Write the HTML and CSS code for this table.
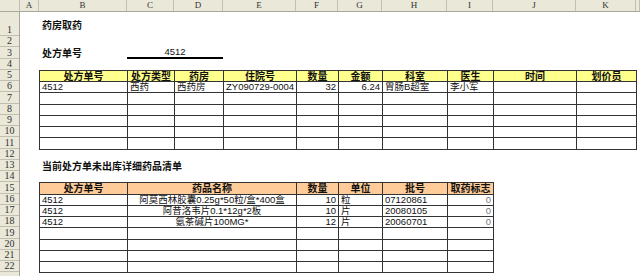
FILE: index.html
```html
<!DOCTYPE html>
<html lang="zh">
<head>
<meta charset="utf-8">
<title>药房取药</title>
<link rel="stylesheet" href="styles.css">
</head>
<body>
<div class="sheet">
  <div class="corner"></div>
  <div class="colhdr">
    <div class="ch">A</div>
    <div class="ch">B</div>
    <div class="ch">C</div>
    <div class="ch">D</div>
    <div class="ch">E</div>
    <div class="ch">F</div>
    <div class="ch">G</div>
    <div class="ch">H</div>
    <div class="ch">I</div>
    <div class="ch">J</div>
    <div class="ch">K</div>
    <div class="ch"></div>
  </div>
  <div class="rowhdr">
    <div class="rh">1</div><div class="rh">2</div><div class="rh">3</div><div class="rh">4</div>
    <div class="rh">5</div><div class="rh">6</div><div class="rh">7</div><div class="rh">8</div>
    <div class="rh">9</div><div class="rh">10</div><div class="rh">11</div><div class="rh">12</div>
    <div class="rh">13</div><div class="rh">14</div><div class="rh">15</div><div class="rh">16</div>
    <div class="rh">17</div><div class="rh">18</div><div class="rh">19</div><div class="rh">20</div>
    <div class="rh">21</div><div class="rh">22</div><div class="rh"></div>
  </div>
  <div class="body">
    <div class="title title-main">药房取药</div>
    <div class="title rx-label">处方单号</div>
    <div class="rx-value">4512</div>

    <table class="grid-table table-main">
      <colgroup>
        <col class="w-b"><col class="w-c"><col class="w-d"><col class="w-e"><col class="w-f">
        <col class="w-g"><col class="w-h"><col class="w-i"><col class="w-j"><col class="w-k">
      </colgroup>
      <tr class="head yellow">
        <th>处方单号</th><th>处方类型</th><th>药房</th><th>住院号</th><th>数量</th>
        <th>金额</th><th>科室</th><th>医生</th><th>时间</th><th>划价员</th>
      </tr>
      <tr>
        <td>4512</td><td>西药</td><td>西药房</td><td>ZY090729-0004</td><td class="num">32</td>
        <td class="num">6.24</td><td>胃肠B超室</td><td>李小军</td><td></td><td></td>
      </tr>
      <tr><td></td><td></td><td></td><td></td><td></td><td></td><td></td><td></td><td></td><td></td></tr>
      <tr><td></td><td></td><td></td><td></td><td></td><td></td><td></td><td></td><td></td><td></td></tr>
      <tr><td></td><td></td><td></td><td></td><td></td><td></td><td></td><td></td><td></td><td></td></tr>
      <tr><td></td><td></td><td></td><td></td><td></td><td></td><td></td><td></td><td></td><td></td></tr>
      <tr><td></td><td></td><td></td><td></td><td></td><td></td><td></td><td></td><td></td><td></td></tr>
    </table>

    <div class="title title-detail">当前处方单未出库详细药品清单</div>

    <table class="grid-table table-detail">
      <colgroup>
        <col class="w-b"><col class="w-cde"><col class="w-f"><col class="w-g"><col class="w-h"><col class="w-i">
      </colgroup>
      <tr class="head orange">
        <th>处方单号</th><th>药品名称</th><th>数量</th><th>单位</th><th>批号</th><th>取药标志</th>
      </tr>
      <tr>
        <td>4512</td><td class="mid">阿莫西林胶囊0.25g*50粒/盒*400盒</td><td class="num">10</td><td>粒</td><td>07120861</td><td class="num flag">0</td>
      </tr>
      <tr>
        <td>4512</td><td class="mid">阿昔洛韦片0.1*12g*2板</td><td class="num">10</td><td>片</td><td>20080105</td><td class="num flag">0</td>
      </tr>
      <tr>
        <td>4512</td><td class="mid">氨茶碱片100MG*</td><td class="num">12</td><td>片</td><td>20060701</td><td class="num flag">0</td>
      </tr>
      <tr><td></td><td></td><td></td><td></td><td></td><td></td></tr>
      <tr><td></td><td></td><td></td><td></td><td></td><td></td></tr>
      <tr><td></td><td></td><td></td><td></td><td></td><td></td></tr>
      <tr><td></td><td></td><td></td><td></td><td></td><td></td></tr>
    </table>
  </div>
</div>
</body>
</html>
```

FILE: styles.css
```css
:root {
  --cols: 19px 88px 47px 49px 73px 42px 44px 65px 46px 83px 60px 1fr;
  --rows: 24px repeat(22, 11.25px);
  --hdr-bg: #e9e8d9;
  --hdr-line: #c2bfae;
}

html, body {
  margin: 0;
  padding: 0;
  background: #fff;
}

.sheet {
  width: 640px;
  height: 276px;
  overflow: hidden;
  display: grid;
  grid-template-columns: 20px 1fr;
  grid-template-rows: 12px 1fr;
  font-family: "Liberation Sans", "Noto Sans CJK SC", sans-serif;
  font-size: 9.5px;
  color: #111;
}

.corner {
  background: var(--hdr-bg);
  border-right: 1px solid var(--hdr-line);
  border-bottom: 1px solid #a9a695;
  box-sizing: border-box;
}

.colhdr {
  display: grid;
  grid-template-columns: var(--cols);
  background: var(--hdr-bg);
  border-bottom: 1px solid #a9a695;
  box-sizing: border-box;
}

.ch {
  border-right: 1px solid var(--hdr-line);
  font-family: "Liberation Serif", serif;
  font-size: 9px;
  line-height: 11px;
  text-align: center;
  color: #333;
  overflow: hidden;
}

.rowhdr {
  display: grid;
  grid-template-rows: var(--rows);
  background: var(--hdr-bg);
  border-right: 1px solid #a9a695;
  box-sizing: border-box;
  overflow: hidden;
}

.rh {
  border-bottom: 1px solid var(--hdr-line);
  box-sizing: border-box;
  font-family: "Liberation Serif", serif;
  font-size: 10px;
  line-height: 10px;
  color: #333;
  display: flex;
  align-items: flex-end;
  justify-content: center;
  overflow: hidden;
}

.body {
  display: grid;
  grid-template-columns: var(--cols);
  grid-template-rows: var(--rows);
  overflow: hidden;
}

.title {
  font-family: "Noto Sans CJK SC", sans-serif;
  font-weight: bold;
  font-size: 10px;
  line-height: 11px;
  align-self: center;
  padding-left: 3px;
  white-space: nowrap;
}

.title-main { grid-area: 1 / 2 / 2 / 6; }
.rx-label { grid-area: 3 / 2 / 4 / 3; }
.title-detail { grid-area: 13 / 2 / 14 / 8; }

.rx-value {
  grid-area: 3 / 3 / 4 / 5;
  text-align: center;
  border-bottom: 2px solid #000;
  line-height: 10px;
  box-sizing: border-box;
}

.table-main { grid-area: 5 / 2 / 12 / 12; }
.table-detail { grid-area: 15 / 2 / 23 / 10; }

.grid-table {
  align-self: start;
  border-collapse: collapse;
  table-layout: fixed;
  width: 100%;
}

.grid-table tr { height: 11.25px; }

.grid-table th,
.grid-table td {
  border: 1px solid #333;
  padding: 0 2px;
  line-height: 10px;
  height: 10px;
  white-space: nowrap;
  overflow: hidden;
  text-align: left;
  font-weight: normal;
}

.grid-table th {
  text-align: center;
  font-weight: bold;
  font-family: "Noto Sans CJK SC", sans-serif;
  font-size: 10px;
}

.yellow th { background: #ffff8c; }
.orange th { background: #ffcc99; }

.grid-table td.num { text-align: right; }
.grid-table td.mid { text-align: center; }
.grid-table td.flag { color: #777; }

.w-b { width: 88px; }
.w-c { width: 47px; }
.w-d { width: 49px; }
.w-e { width: 73px; }
.w-cde { width: 169px; }
.w-f { width: 42px; }
.w-g { width: 44px; }
.w-h { width: 65px; }
.w-i { width: 46px; }
.w-j { width: 83px; }
.w-k { width: 60px; }
```
